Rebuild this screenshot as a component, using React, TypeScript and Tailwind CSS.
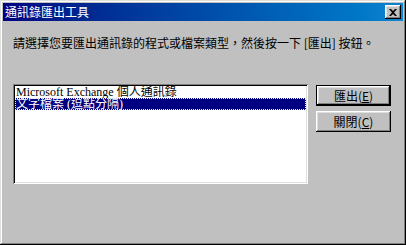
import React from "react";

const raised =
  "shadow-[inset_-1px_-1px_#000000,inset_1px_1px_#ffffff,inset_-2px_-2px_#808080,inset_2px_2px_#dfdfdf]";

export default function App() {
  return (
    <div
      className="w-[406px] h-[245px] bg-[#c0c0c0] p-[3px] flex flex-col shadow-[inset_-1px_-1px_#000000,inset_1px_1px_#dfdfdf,inset_-2px_-2px_#808080,inset_2px_2px_#ffffff]"
      style={{ fontFamily: '"Noto Sans CJK TC", sans-serif' }}
    >
      <div className="h-[18px] flex items-center justify-between bg-gradient-to-r from-[#000080] to-[#1084d0] pl-[2px] pr-[2px]">
        <span className="text-white text-[12px] leading-[14px]">通訊錄匯出工具</span>
        <div className={`w-[16px] h-[14px] bg-[#c0c0c0] flex items-center justify-center ${raised}`}>
          <svg width="8" height="7" viewBox="0 0 8 7">
            <path d="M0 0h2l2 2 2-2h2L5 3.5 8 7H6L4 5 2 7H0l3-3.5z" fill="#000" />
          </svg>
        </div>
      </div>
      <div className="flex flex-col pl-[10px] pt-[15px]">
        <div className="text-[12px] leading-[14px] text-black">
          請選擇您要匯出通訊錄的程式或檔案類型，然後按一下 [匯出] 按鈕。
        </div>
        <div className="flex mt-[34px]">
          <div className="w-[295px] h-[100px] bg-white p-[2px] shadow-[inset_1px_1px_#808080,inset_-1px_-1px_#ffffff,inset_2px_2px_#000000,inset_-2px_-2px_#dfdfdf]">
            <div
              className="flex h-[12px] px-[1px] text-black"
              style={{ fontFamily: '"Liberation Serif", "Noto Sans CJK TC", serif' }}
            >
              <span className="inline-block h-[12px] overflow-hidden text-[12px] leading-[12px] whitespace-nowrap">
                Microsoft Exchange 個人通訊錄
              </span>
            </div>
            <div
              className="flex h-[12px] px-[1px] text-white bg-[#000080] outline outline-1 outline-dotted outline-[#ffff80] -outline-offset-1"
              style={{ fontFamily: '"Liberation Serif", "Noto Sans CJK TC", serif' }}
            >
              <span className="inline-block h-[12px] overflow-hidden text-[12px] leading-[12px] whitespace-nowrap">
                文字檔案 (逗點分隔)
              </span>
            </div>
          </div>
          <div className="flex flex-col ml-[8px] mt-[1px] gap-[5px]">
            <div className="w-[75px] h-[21px] border border-black">
              <div className={`w-full h-full flex items-center justify-center text-[12px] text-black ${raised}`}>
                匯出(<span className="underline">E</span>)
              </div>
            </div>
            <div className={`w-[75px] h-[21px] flex items-center justify-center text-[12px] text-black ${raised}`}>
              關閉(<span className="underline">C</span>)
            </div>
          </div>
        </div>
      </div>
    </div>
  );
}
